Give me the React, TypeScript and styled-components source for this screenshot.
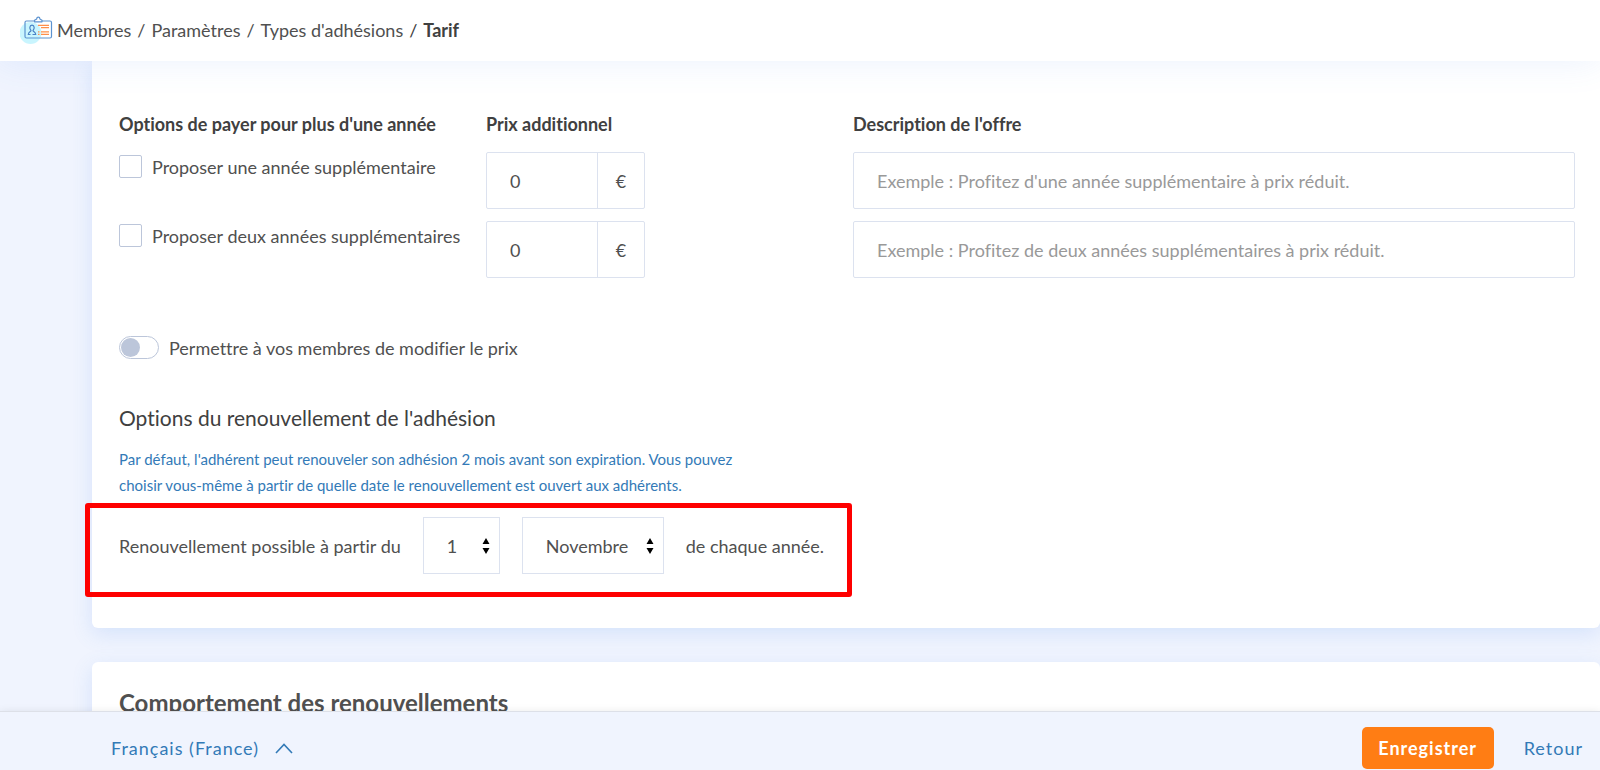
import React from "react";
import styled, { createGlobalStyle } from "styled-components";

const GlobalStyle = createGlobalStyle`
  * { box-sizing: border-box; }
  body {
    margin: 0;
    background: #f0f4fe;
    color: #505050;
    font-family: Lato, "Open Sans", sans-serif;
    font-size: 18px;
    font-variant-ligatures: none;
    line-height: 22px;
  }
  button, input, select { font: inherit; color: inherit; }
`;

const Page = styled.div`
  display: flex;
  flex-direction: column;
  height: 100vh;
`;

const Header = styled.header`
  position: relative;
  z-index: 1;
  flex: none;
  display: flex;
  align-items: center;
  gap: 4px;
  height: 61px;
  padding: 0 20px 2px;
  background: #fff;
  box-shadow: 0 0 36px rgba(82, 140, 240, 0.12);
`;

const HeaderIcon = styled.svg`
  flex: none;
`;

const Crumbs = styled.ol`
  display: flex;
  margin: 0;
  padding: 0;
  list-style: none;
`;

const Crumb = styled.li`
  & + &::before {
    content: "/";
    margin: 0 6px;
    font-weight: 400;
  }
  &[aria-current] {
    color: #404040;
    font-weight: 700;
  }
`;

const CrumbLink = styled.a`
  color: inherit;
  text-decoration: none;
`;

const Content = styled.main`
  flex: 1;
  min-height: 0;
  overflow: hidden;
  padding-left: 92px;
`;

const Card = styled.section<{ $first?: boolean }>`
  padding: ${(p) => (p.$first ? "52px 25px 54px 27px" : "25px 25px 26px 27px")};
  margin-bottom: 34px;
  background: #fff;
  border-radius: ${(p) => (p.$first ? "0 0 6px 6px" : "6px")};
  box-shadow: 0 6px 20px rgba(82, 140, 240, 0.17);
`;

const CardTitle = styled.h2`
  margin: 0;
  font-size: 24px;
  line-height: 32px;
  font-weight: 700;
`;

const OfferGrid = styled.div`
  display: grid;
  grid-template-columns: repeat(4, 1fr);
  gap: 12px;
`;

const ColumnTitle = styled.div<{ $wide?: boolean }>`
  grid-column: span ${(p) => (p.$wide ? 2 : 1)};
  padding-bottom: 5px;
  color: #404040;
  font-weight: 700;
`;

const CheckLabel = styled.label`
  display: flex;
  align-items: center;
  align-self: start;
  gap: 10px;
  margin-top: 3px;
  white-space: nowrap;
`;

const CheckBox = styled.input`
  appearance: none;
  flex: none;
  width: 23px;
  height: 23px;
  margin: 0;
  border: 1px solid #bcc6da;
  border-radius: 2px;
  background: #fff;
`;

const PriceGroup = styled.div`
  display: flex;
  width: 159px;
  height: 57px;
  border: 1px solid #dce2ef;
  border-radius: 2px;
`;

const PriceInput = styled.input`
  flex: 1;
  min-width: 0;
  padding: 0 23px;
  border: 0;
  background: none;
`;

const Unit = styled.span`
  display: grid;
  place-items: center;
  width: 47px;
  border-left: 1px solid #dce2ef;
`;

const DescriptionInput = styled.input`
  grid-column: span 2;
  height: 57px;
  padding: 0 23px;
  border: 1px solid #dce2ef;
  border-radius: 2px;
  &::placeholder { color: #999; opacity: 1; }
`;

const SwitchLabel = styled.label`
  display: flex;
  align-items: center;
  gap: 10px;
  width: fit-content;
  margin-top: 58px;
`;

const Switch = styled.input`
  appearance: none;
  display: flex;
  align-items: center;
  width: 40px;
  height: 23px;
  margin: 0;
  padding: 0 1px;
  border: 1px solid #bcc6da;
  border-radius: 12px;
  &::before {
    content: "";
    width: 19px;
    height: 19px;
    border-radius: 50%;
    background: #bcc6da;
  }
  &:checked { justify-content: flex-end; }
`;

const SubTitle = styled.h3`
  margin: 47px 0 16px;
  color: #404040;
  font-size: 21px;
  line-height: 24px;
  font-weight: 400;
`;

const Help = styled.p`
  max-width: 640px;
  margin: 0;
  color: #337ab7;
  font-size: 15px;
  line-height: 26px;
`;

const RenewalRow = styled.div`
  position: relative;
  display: flex;
  align-items: center;
  gap: 22px;
  width: fit-content;
  margin-top: 19px;
`;

const Highlight = styled.div`
  position: absolute;
  inset: -14px -28px -23px -34px;
  border: 5px solid #fe0000;
  border-radius: 3px;
  pointer-events: none;
`;

const SelectWrap = styled.div`
  position: relative;
  display: flex;
`;

const Select = styled.select<{ $width: number }>`
  appearance: none;
  width: ${(p) => p.$width}px;
  height: 57px;
  padding: 0 23px;
  border: 1px solid #dce2ef;
  border-radius: 0;
  background: #fff;
`;

const Arrows = styled.svg`
  position: absolute;
  right: 10px;
  top: 21px;
  pointer-events: none;
`;

const Footer = styled.footer`
  position: relative;
  z-index: 1;
  flex: none;
  display: flex;
  align-items: center;
  justify-content: space-between;
  height: 59px;
  padding: 14px 17px 0 111px;
  border-top: 1px solid #dde0e8;
  background: #f0f4fe;
  box-shadow: 0 0 8px rgba(0, 0, 0, 0.08);
`;

const LanguageButton = styled.button`
  display: flex;
  align-items: center;
  gap: 16px;
  padding: 0;
  border: 0;
  background: none;
  color: #337ab7;
  letter-spacing: 1px;
`;

const Actions = styled.div`
  display: flex;
  align-items: center;
  gap: 30px;
`;

const SaveButton = styled.button`
  width: 132px;
  height: 42px;
  padding: 0;
  border: 0;
  border-radius: 5px;
  background: #ff7d14;
  color: #fff;
  font-weight: 700;
  letter-spacing: 1px;
`;

const BackLink = styled.a`
  color: #337ab7;
  letter-spacing: 1px;
  text-decoration: none;
`;

const offers = [
  {
    id: "one",
    label: "Proposer une année supplémentaire",
    example: "Exemple : Profitez d'une année supplémentaire à prix réduit.",
  },
  {
    id: "two",
    label: "Proposer deux années supplémentaires",
    example: "Exemple : Profitez de deux années supplémentaires à prix réduit.",
  },
];

const months = [
  "Janvier", "Février", "Mars", "Avril", "Mai", "Juin", "Juillet",
  "Août", "Septembre", "Octobre", "Novembre", "Décembre",
];

function MemberCardIcon() {
  return (
    <HeaderIcon width="33" height="30" viewBox="0 0 33 30" fill="none" aria-hidden="true">
      <circle cx="10.500" cy="18" r="11" fill="#c9f5fe" />
      <path
        d="M14 6H6.500Q5 6 5 7.500V21.500Q5 23 6.500 23H30Q31.500 23 31.500 21.500V7.500Q31.500 6 30 6H22.500M14.500 6.800V5.300L16.700 4Q16.700 2.200 18.300 2.200T19.900 4L22 5.300V6.800Z"
        stroke="#5c93d0" strokeWidth="1.200" strokeLinejoin="round"
      />
      <path
        d="M12 10.200C9.300 10.200 9.300 14 11 15.500C11 17 8.300 16.800 8.300 19.500H10.500M12 10.200C14.700 10.200 14.700 14 13 15.500C13 17 15.700 16.800 15.700 19.500H12.500"
        stroke="#4a83c5" strokeWidth="1.200"
      />
      <path d="M18 10.300H29M21 12.700H29M18 16.800H19.500M21 16.800H29M18 19.300H19.500M21 19.300H29" stroke="#ff8f4a" strokeWidth="1.300" />
    </HeaderIcon>
  );
}

function NumberArrows() {
  return (
    <Arrows width="8" height="16" viewBox="0 0 8 16" aria-hidden="true">
      <path d="M4 0L7.500 6H0.500ZM0.500 10H7.500L4 16Z" fill="#000" />
    </Arrows>
  );
}

export default function App() {
  return (
    <Page>
      <GlobalStyle />
      <Header>
        <MemberCardIcon />
        <nav aria-label="Fil d'Ariane">
          <Crumbs>
            <Crumb><CrumbLink href="#membres">Membres</CrumbLink></Crumb>
            <Crumb><CrumbLink href="#parametres">Paramètres</CrumbLink></Crumb>
            <Crumb><CrumbLink href="#types">Types d'adhésions</CrumbLink></Crumb>
            <Crumb aria-current="page">Tarif</Crumb>
          </Crumbs>
        </nav>
      </Header>

      <Content>
        <Card $first>
          <OfferGrid>
            <ColumnTitle>Options de payer pour plus d'une année</ColumnTitle>
            <ColumnTitle id="price-title">Prix additionnel</ColumnTitle>
            <ColumnTitle id="description-title" $wide>Description de l'offre</ColumnTitle>
            {offers.map((offer) => (
              <React.Fragment key={offer.id}>
                <CheckLabel>
                  <CheckBox type="checkbox" />
                  {offer.label}
                </CheckLabel>
                <PriceGroup>
                  <PriceInput aria-labelledby="price-title" defaultValue="0" />
                  <Unit>€</Unit>
                </PriceGroup>
                <DescriptionInput aria-labelledby="description-title" placeholder={offer.example} />
              </React.Fragment>
            ))}
          </OfferGrid>

          <SwitchLabel>
            <Switch type="checkbox" role="switch" />
            Permettre à vos membres de modifier le prix
          </SwitchLabel>

          <SubTitle>Options du renouvellement de l'adhésion</SubTitle>
          <Help>
            Par défaut, l'adhérent peut renouveler son adhésion 2 mois avant son expiration. Vous pouvez
            choisir vous-même à partir de quelle date le renouvellement est ouvert aux adhérents.
          </Help>

          <RenewalRow>
            <label htmlFor="renewal-day">Renouvellement possible à partir du</label>
            <SelectWrap>
              <Select id="renewal-day" $width={77} defaultValue="1">
                {Array.from({ length: 31 }, (_, i) => (
                  <option key={i}>{i + 1}</option>
                ))}
              </Select>
              <NumberArrows />
            </SelectWrap>
            <SelectWrap>
              <Select id="renewal-month" $width={142} defaultValue="Novembre" aria-label="Mois">
                {months.map((month) => (
                  <option key={month}>{month}</option>
                ))}
              </Select>
              <NumberArrows />
            </SelectWrap>
            <label htmlFor="renewal-month">de chaque année.</label>
            <Highlight />
          </RenewalRow>
        </Card>

        <Card>
          <CardTitle>Comportement des renouvellements</CardTitle>
        </Card>
      </Content>

      <Footer>
        <LanguageButton type="button">
          Français (France)
          <svg width="18" height="11" viewBox="0 0 18 11" fill="none" aria-hidden="true">
            <path d="M1 10L9 1.500L17 10" stroke="#337ab7" strokeWidth="1.600" />
          </svg>
        </LanguageButton>
        <Actions>
          <SaveButton type="button">Enregistrer</SaveButton>
          <BackLink href="#retour">Retour</BackLink>
        </Actions>
      </Footer>
    </Page>
  );
}
